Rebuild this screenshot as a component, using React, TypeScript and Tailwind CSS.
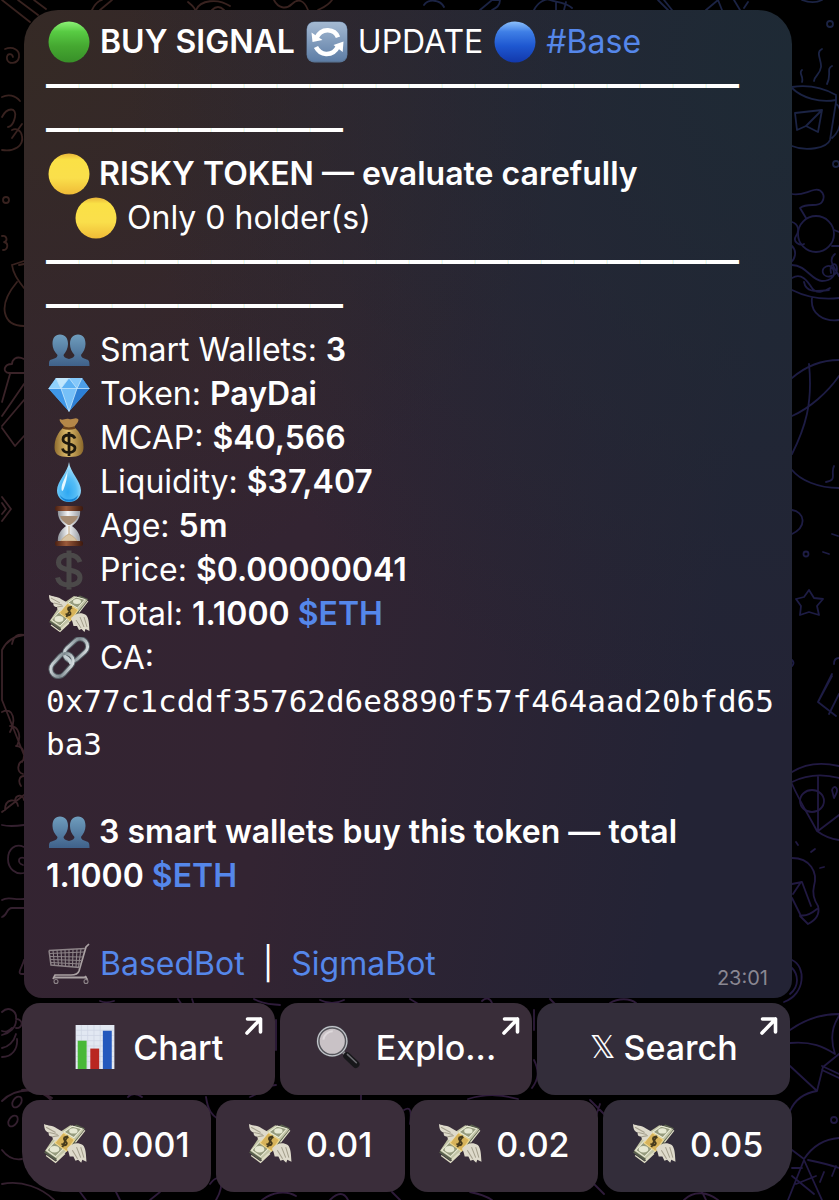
import type { ReactNode } from "react";

/* ───────── Emoji artwork ───────── */
type EmojiName =
    | "green"
    | "blue"
    | "yellow"
    | "refresh"
    | "people"
    | "gem"
    | "bag"
    | "drop"
    | "hourglass"
    | "dollar"
    | "cash"
    | "link"
    | "cart"
    | "chart"
    | "search";

const Gradients = () => (
    <svg className="absolute h-0 w-0" aria-hidden="true">
        <defs>
            <linearGradient id="g-green" x2="0" y2="1">
                <stop offset="0" stopColor="#8df277" />
                <stop offset=".25" stopColor="#58cb43" />
                <stop offset=".6" stopColor="#45a831" />
                <stop offset="1" stopColor="#388f28" />
            </linearGradient>
            <linearGradient id="g-blue" x2="0" y2="1">
                <stop offset="0" stopColor="#8cc0fb" />
                <stop offset=".25" stopColor="#3f7fe6" />
                <stop offset=".6" stopColor="#1e57d0" />
                <stop offset="1" stopColor="#1238ab" />
            </linearGradient>
            <linearGradient id="g-yellow" x2="0" y2="1">
                <stop offset="0" stopColor="#e9b63a" />
                <stop offset=".15" stopColor="#fae146" />
                <stop offset=".6" stopColor="#fadf4b" />
                <stop offset="1" stopColor="#efbb37" />
            </linearGradient>
            <linearGradient id="g-tile" x2="0" y2="1">
                <stop offset="0" stopColor="#a4b9d2" />
                <stop offset="1" stopColor="#5e7ea6" />
            </linearGradient>
            <linearGradient id="g-people" x2="0" y2="1">
                <stop offset="0" stopColor="#6f9dbd" />
                <stop offset="1" stopColor="#3f618a" />
            </linearGradient>
            <linearGradient id="g-bag" x2="1" y2="0">
                <stop offset="0" stopColor="#8f6c2e" />
                <stop offset=".45" stopColor="#dfbd6c" />
                <stop offset="1" stopColor="#8a672a" />
            </linearGradient>
            <radialGradient id="g-drop" cx=".45" cy=".75" r=".7">
                <stop offset="0" stopColor="#2fa8f2" />
                <stop offset=".5" stopColor="#55bdf6" />
                <stop offset="1" stopColor="#b5e6fc" />
            </radialGradient>
            <linearGradient id="g-wood" x2="1" y2="0">
                <stop offset="0" stopColor="#4a2012" />
                <stop offset=".4" stopColor="#9a5a3a" />
                <stop offset="1" stopColor="#3c180d" />
            </linearGradient>
            <linearGradient id="g-glass" x2="1" y2="0">
                <stop offset="0" stopColor="#8d9299" />
                <stop offset=".45" stopColor="#f4f5f6" />
                <stop offset="1" stopColor="#9a9ea5" />
            </linearGradient>
            <linearGradient id="g-steel" x2="1" y2="1">
                <stop offset="0" stopColor="#dce3e6" />
                <stop offset=".5" stopColor="#7d898f" />
                <stop offset="1" stopColor="#e7edef" />
            </linearGradient>
        </defs>
    </svg>
);

const art: Record<EmojiName, ReactNode> = {
    green: <circle cx="21" cy="21" r="20.5" fill="url(#g-green)" />,
    blue: <circle cx="21" cy="21" r="20.5" fill="url(#g-blue)" />,
    yellow: <circle cx="21" cy="21" r="20.5" fill="url(#g-yellow)" />,
    refresh: (
        <g>
            <rect x=".5" y=".5" width="41" height="41" rx="8" fill="#5a7697" />
            <rect x="1" y="1" width="40" height="39" rx="7" fill="url(#g-tile)" />
            <g fill="none" stroke="#fff" strokeWidth="4.6">
                <path d="M10 17.5C13 11 18 9 22 9.2c5 .2 8.5 3 10 7" />
                <path d="M32 25.5C29 31.5 24 33.2 20 33c-4.5-.3-8-3-10-7" />
            </g>
            <path d="M5.5 11.5 6.5 21l10-2zM36.7 31 37.5 20.5 27.5 24z" fill="#fff" />
        </g>
    ),
    people: (
        <g fill="url(#g-people)">
            <path d="M1 37c0-5 0-6 4-7 3-1 4.5-2 4.5-4-3-3-5-7-5-11C4.5 9 7 5.5 12 5.5S20 9 20 15c0 4-2 8-4.5 11 0 2 2 3 5.5 4 3.5-1 5.5-2 5.5-4-3-3-4.5-7-4.5-11 0-6 3-9.5 8-9.5s7.5 3.5 7.5 9.5c0 4-2 8-4.5 11 0 2 1.5 3 4.5 4 3.5 1 4 2 4 7z" />
        </g>
    ),
    gem: (
        <g>
            <path d="M8 5h26l7.5 10.5L21 38.5.5 15.5z" fill="#4ba3ee" />
            <path d="M8 5l5 10.5H.5z" fill="#8fd0fb" />
            <path d="M8 5h13l-8 10.5z" fill="#c1e7fd" />
            <path d="M34 5H21l8 10.5z" fill="#85c8fa" />
            <path d="M21 5l8 10.5H13z" fill="#5db1f3" />
            <path d="M34 5l7.5 10.5H29z" fill="#4c9ee8" />
            <path d="M.5 15.5H13l8 23z" fill="#3f97e8" />
            <path d="M13 15.5h16l-8 23z" fill="#76c0f8" />
            <path d="M29 15.5h12.5L21 38.5z" fill="#2d7fd5" />
            <path d="M.5 15.5h41M13 15.5l8 23 8-23M8 5l5 10.5L21 5l8 10.5L34 5" fill="none" stroke="#c8e9fd" strokeWidth=".8" />
        </g>
    ),
    bag: (
        <g>
            <path d="M12 2c3 2 5-1 9 0s6-2 9 0c2 2-3 6-4 9H17c-1-3-7-7-5-9z" fill="#b48748" />
            <path d="M16 10c-6 5-9.5 12-9.5 20C6.5 37 10 40 21 40s14.5-3 14.5-10c0-8-3.5-15-9.5-20z" fill="url(#g-bag)" />
            <path d="M15 10.5q6 2 12 0" stroke="#6c431b" strokeWidth="2.5" fill="none" />
            <path d="M27 21.5c-1-2.5-3-3.5-6-3.5-4 0-6 2-6 4.5 0 6 12 3 12 8.5 0 3-3 4.5-6 4.5-3.5 0-6-1.5-6.5-4M21 15v24" fill="none" stroke="#1d180d" strokeWidth="2.8" />
        </g>
    ),
    drop: (
        <g>
            <path d="M21 1C20 11 9 20 9 29.5 9 36.5 14.5 41 21 41s12-4.5 12-11.5C33 20 22 11 21 1z" fill="url(#g-drop)" />
            <path d="M19.5 10C18 16 13.5 22 13.5 27.5c0 3 1 3 2 1C17.5 23 19.5 17 19.5 10z" fill="#e5f7ff" />
            <path d="M12 34c4 6 14 6 18 0-1 5-5 6.5-9 6.5S13 38 12 34z" fill="#1682d4" />
        </g>
    ),
    hourglass: (
        <g>
            <path d="M10 4h22c1 9-3 13-8 17 5 4 9 8 8 17H10c-1-9 3-13 8-17-5-4-9-8-8-17z" fill="url(#g-glass)" />
            <path d="M12 11h18c-1 4-4 6.5-8 9h-2c-4-2.5-7-5-8-9z" fill="#a68c73" />
            <path d="M21 21v8c-4 2-6 4-8 7h16c-2-3-4-5-8-7" fill="#d8c4a3" stroke="#c6ab83" />
            <rect x="7" y="1" width="28" height="5" rx="2" fill="url(#g-wood)" />
            <rect x="7" y="36" width="28" height="5" rx="2" fill="url(#g-wood)" />
        </g>
    ),
    dollar: (
        <path
            d="M32 13c-1.5-4.5-5-7-11-7S10.5 8.5 10.5 13.5C10.5 24 32 18 32 28.5c0 5-4.5 7.5-11 7.5-7 0-10.5-3-11.5-7.5M21 1.5v39"
            fill="none"
            stroke="#4b4949"
            strokeWidth="5"
        />
    ),
    cash: (
        <g>
            <path d="M21 8 32 2.5 40 6 30 22 12 37 1 29 12 17z" fill="#59604d" />
            <path d="M12 12.5 26 3l13.5 4-12 14.5L14 35.5 2 27.5z" fill="#c2c5a6" />
            <path d="M20 9.5 28 4l9 2.5-7.5 8.5zM12 18l9 6-9 9-8.5-6z" fill="#969c7e" stroke="#e9ead5" />
            <ellipse cx="29" cy="8.5" rx="4" ry="2.5" fill="#e6e8d2" />
            <ellipse cx="11" cy="26" rx="4.5" ry="3" fill="#e6e8d2" />
            <path d="M3 32 12 38.5 21 30M31 19.5 40 8M13 36l9-8" stroke="#deddc4" strokeWidth="1.2" fill="none" />
            <path d="M19 10 30 17 22.5 28 11.5 20z" fill="#d7b35a" stroke="#f0d98d" />
            <path d="M24 15.5c-1-2-4-1.5-4 .5s3.5 3 2.5 5-4 1.5-4.5-.5M23.5 13l-5 11" stroke="#453a1c" strokeWidth="1.8" fill="none" />
            <path d="M1 2c4 2 8 1 12 4l7 4-7 8c-3 0-4-2-4-4-3 0-4-2-3.5-4C3 10 1 7 1 2z" fill="#dedacb" />
            <path d="M3 5l9 5M6 10l8 2M9 14l6-1" stroke="#a49f8c" fill="none" />
            <path d="M23 25c5-5 10-6 15-3 3 3 3 9 3.5 16l-4-2-1 3-3-3-2.5 1-2-4-3.5 0-1-4z" fill="#dedacb" />
            <path d="M28 27l5 8M32 24l4 10M36 24l3 10" stroke="#a49f8c" fill="none" />
        </g>
    ),
    link: (
        <g fill="none" strokeLinecap="round">
            <g stroke="#535c63" strokeWidth="5">
                <rect x="15" y="5.5" width="26" height="15" rx="7.5" transform="rotate(-42 28 13)" />
                <rect x="1" y="20.5" width="26" height="15" rx="7.5" transform="rotate(-48 14 28)" />
            </g>
            <g stroke="url(#g-steel)" strokeWidth="3">
                <rect x="15" y="5.5" width="26" height="15" rx="7.5" transform="rotate(-42 28 13)" />
                <rect x="1" y="20.5" width="26" height="15" rx="7.5" transform="rotate(-48 14 28)" />
            </g>
            <path d="M18 20c2 1 4 3 4.5 6" stroke="#c6d0d4" strokeWidth="3" />
        </g>
    ),
    cart: (
        <g fill="none" stroke="#8d8488" strokeWidth="1.1">
            <path d="M41 1 38 4 31 28c-1 3-4 4-8 4H7l-2 4" strokeWidth="1.7" stroke="#aaa1a3" />
            <path d="M1 7.5 37 5.5M1 7.5 3 22l29 2.5" strokeWidth="1.5" />
            <path d="M1.5 10.5 36 9M2 13.5l33 .5M2.3 16.5l31.7 1M2.7 19.5l30.5 1.5" />
            <path d="M5 7.3l1.5 15M9 7l1.5 15.5M13 7l1 16M17 6.8 17.5 23M21 6.5v17M25 6.2 24.5 23.5M29 6 28 24M33 5.8 30.5 24" />
            <path d="M6 34.5h33M37 33l2.5 4" strokeWidth="1.8" stroke="#aaa1a3" />
            <circle cx="8" cy="38.5" r="2" />
            <circle cx="38" cy="38.5" r="2" />
        </g>
    ),
    chart: (
        <g>
            <rect x="2.5" y="0" width="37" height="42" fill="#e2e8f2" />
            <path d="M3 5h36M3 10h36M3 15h36M3 20h36M3 25h36M3 30h36M3 35h36M8 0v42M14 0v42M20 0v42M26 0v42" stroke="#cdd5e4" strokeWidth=".7" />
            <rect x="4.5" y="15" width="8.5" height="27" fill="#48b837" />
            <rect x="16.5" y="22.5" width="8.5" height="19.5" fill="#b92620" />
            <rect x="28.5" y="5.5" width="8.5" height="36.5" fill="#2458bd" />
        </g>
    ),
    search: (
        <g>
            <path d="M26 26l5 5" stroke="#8c8c90" strokeWidth="3" />
            <path d="M29.5 29.5 38 37.5" stroke="#17171a" strokeWidth="7" strokeLinecap="round" />
            <path d="M30 28 38.5 36" stroke="#6b6b70" strokeWidth="1.5" strokeLinecap="round" />
            <circle cx="15.5" cy="15.5" r="13.5" fill="#c9c2c6" stroke="#55555b" strokeWidth="3" />
            <circle cx="15.5" cy="15.5" r="14" fill="none" stroke="#c4c7cd" strokeWidth="1.2" />
            <path d="M7 14a9 9 0 0 1 9-8" stroke="#ded9dc" strokeWidth="2" fill="none" />
        </g>
    ),
};

const Emoji = ({ name }: { name: EmojiName }) => (
    <svg viewBox="-2 0 45 42" className="-my-3 inline-block h-[42px] w-[45px] align-[2px]" aria-hidden="true">
        {art[name]}
    </svg>
);

const ButtonEmoji = ({ name }: { name: EmojiName }) => (
    <svg viewBox="0 0 42 42" className="h-11 w-11 shrink-0" aria-hidden="true">
        {art[name]}
    </svg>
);

/* ───────── Chat wallpaper ───────── */
const Wallpaper = () => (
    <svg
        viewBox="0 0 839 1200"
        preserveAspectRatio="xMidYMin slice"
        className="absolute inset-0 h-full w-full"
        aria-hidden="true"
    >
        <g fill="none" strokeWidth="1.8" strokeLinecap="round" strokeLinejoin="round">
            <g stroke="#38221f">
                <path d="M2 0l28 22M18 0l20 15M34 0l12 9M92 10c3-6 6-9 10-10M100 10 112 0M188 2c5 4 9 8 6 10M196 10c4-10 22-12 34-4M212 10c4-4 8-4 12 0M274 0c4 8 12 10 18 4s12-4 16 6M318 10c4-2 10-4 14-10" />
                <path d="M5 49c8-3 15 1 14 8s-11 8-12 2 5-6 6-2M2 97c6-3 13-2 18 4M2 117c5-10 15-10 13 0s-7 10-7 10M22 124 12 138M2 150c12 2 22-4 20-14-1-6-6-8-10-6" />
                <circle cx="6" cy="200" r="3" />
                <path d="M2 236c5-1 6 5 2 6 5 1 4 8-1 8M12 265l12-4M12 265c1 8 5 14 12 23M17 282c-10 12-14 22-12 31 2 9 9 13 19 13M19 265l5-1" />
            </g>
            <g stroke="#3a2328">
                <path d="M24 359c-8-4-12 1-12 5-8 0-10 8-3 9h15M10 374 2 402M24 384 2 416M2 428l13 18 9-10M2 426l22-26M2 497l9 12-9 12M2 503l4 6-4 5" />
                <path d="M2 650c4-8 12-14 22-15M12 644c2-9 6-10 12-9M2 650v50l22 55M2 712c12-6 14 10 8 20M10 726c10 0 11 12 7 20M16 746c8 0 10 10 6 16M24 760c-8 3-7 12-1 14M24 776c-5 0-6 6-3 10M24 795 2 812M5 810c0-12 12-12 13-4M15 802c0-8 8-8 9-2" />
            </g>
            <g stroke="#34202f">
                <path d="M2 825c8 2 15 1 22 0M24 847c-9-4-16 2-16 12s8 16 16 14M24 858c-6-2-7 5-1 7M2 900c6-4 10 0 22-1M2 917c6-2 4-9 10-9h12M24 960c-1 6-8 14-2 14h2" />
                <path d="M2 1012c6-6 15-2 14 7 8 0 7 10 0 9M2 1035c8-2 14-8 14-14M2 1048c6-1 12-6 14-14M2 1057c10 0 16-8 15-18M12 1028c-4 4-6 4-10 3" />
                <path d="M2 1101c14-14 38-14 50 0M2 1150c6 8 14 10 20 9M2 1184c20-4 40 4 52 16M22 1090c12-2 22 2 30 8" />
                <ellipse cx="17" cy="1102" rx="4" ry="6" transform="rotate(35 17 1102)" />
                <ellipse cx="13" cy="1121" rx="4" ry="6" transform="rotate(35 13 1121)" />
            </g>
            <g stroke="#2f1c3b">
                <path d="M100 1001c4 2 8 2 14 0M178 999l4 6M192 999l2 6M254 999c10 6 20 5 26 6M320 1000c8 4 16 4 24 0M410 999l10 6M482 1001c4-4 8-3 10 2M550 999l6 6M610 1003c8-5 20-5 26 0M128 1097c3-4 9-4 14 0M206 1097c2 14 6 18 12 22M250 1097c8-2 14-12 26-12M276 1020v30M361 1095v8M404 1110c6-4 8 0 6 14M468 1099c20-6 34-4 50 0M590 1100l14 14M600 1104l-4 12" />
                <path d="M80 1192l6 8M120 1200l-4-8M150 1200l10-8M210 1184c10-14 16 0 6 16M262 1200c10-8 24-10 34-4M330 1200c8-8 14-8 18 0M392 1192l8 8M470 1192c10 2 16 4 22 8M580 1170l24 24M684 1200c10-10 24-8 34 0M702 1192l4 8M534 1010v20M534 1060c6 12 4 20-2 28" />
            </g>
            <g stroke="#1b2344">
                <path d="M424 5c4-6 16-6 20 2M480 10 492 0h8c0 6-4 8-8 10M534 10c4-8 12-12 16-10s16 2 22 8M556 10v-8M564 10l2-8M658 0l10 10M664 0l8 10M706 10 718 0l4 10M740 10 734 0M744 8l4-6M802 0c8 3 14 3 20 0" />
                <circle cx="830" cy="24" r="3" />
                <path d="M822 49c-7 3 0 12-1 18-1 8-6 8-7 14M802 70c-4 3 2 6 0 12M832 66c-6 3 0 8-5 18M792 87c14-2 28-1 44 8M792 88c10 10 28 15 44 12M836 96v6l-6 38c-3 8-24 12-38 6M836 104c6 2 8 24-4 34M795 113l27-3-4 22-12-6-9 4zM822 110l-16 16" />
                <circle cx="836" cy="164" r="3" />
            </g>
            <g stroke="#1d1c44">
                <path d="M792 194c8 2 14-2 22-4s12 6 8 12-14 0-22 6l6 10" />
                <circle cx="816" cy="234" r="18" />
                <path d="M792 222c6 2 8 8 4 14s4 10 8 8M834 230l5 2M832 246h7M792 246c6 6 2 14-1 16M792 265c14 0 20 16 30 16s14-6 11-12-12-2-10 4 14 4 14-4-8-6-6 4M792 278c10-6 16 4 20 10s12 4 18 0M792 290c16 8 30 10 47 8M804 282c2 10 10 10 25 8M812 298c-2 16 12 24 27 22M835 254c-8 6 0 14 4 22" />
                <path d="M792 378c14-12 30-18 47-18M792 416c18-8 36-24 47-40M809 364c4 40-4 64-17 90M792 470c8 10 26 18 47 18M834 466c-4 8 4 14-8 16M792 510c12 2 16 16 0 24" />
                <circle cx="806" cy="554" r="2.5" />
                <path d="M823 552l6 2M832 534l6 2M809 590l5 8 9 1-6 7 2 9-10-3-9 3 1-9-5-7 8-2zM792 660c2 2 2 4 0 6M832 674l-14 28 18 14M818 702l14-26M829 714l10-20M834 664c0-6 4-6 5-6" />
            </g>
            <g stroke="#211942">
                <path d="M792 772c14-9 30-10 47-6M792 782c16-8 32-8 47-4M792 784c8 18 16 30 25 47 8 6 14 8 22 9M818 776v55M818 831l21-16M832 790c2-6 7-2 4 4l-2 4z" />
                <ellipse cx="812" cy="801" rx="12" ry="11" />
                <path d="M796 842l2 3M811 852l4-3M820 868l4-1M792 858c18 0 26 14 22 28-2 8 0 14 4 20M800 914 792 898M818 906c2 8-2 14-10 18l-8-8M800 915c6 2 12-2 17-6M792 884l10-2 9 24M801 882l-8 12M792 960c14 6 14 34-8 42M792 968c6 6 8 18-2 26" />
                <path d="M790 1030c14-10 30-16 49-16M790 1043c22-2 34 4 45 11M790 1066l27 25 6-24 16-13M817 1091c-12 2-22 8-27 20M839 1016c-8 12-8 26-4 38M822 1066l17 8M822 1070l17 8M792 1150l12 9c8-12 20-20 35-21M792 1168h10M808 1160c10 2 20 4 31 8M788 1200l16-40 18 40M796 1184l20-8M792 1176l22 18M824 1172l-4 10M836 1166l-4 10" />
                <circle cx="834" cy="1120" r="3" />
            </g>
        </g>
    </svg>
);

/* ───────── Message ───────── */
const Divider = () => (
    <p className="-mt-[2px] mb-[2px] font-['Noto_Sans_CJK_SC',sans-serif] text-[33px]">
        {"━".repeat(21)}
        <br />
        {"━".repeat(9)}
    </p>
);

const TextLink = ({ children }: { children: ReactNode }) => (
    <a href="#" className="text-[#5587ea]">
        {children}
    </a>
);

const stats: { icon: EmojiName; label: string; value: string; token?: string }[] = [
    { icon: "people", label: "Smart Wallets:", value: "3" },
    { icon: "gem", label: "Token:", value: "PayDai" },
    { icon: "bag", label: "MCAP:", value: "$40,566" },
    { icon: "drop", label: "Liquidity:", value: "$37,407" },
    { icon: "hourglass", label: "Age:", value: "5m" },
    { icon: "dollar", label: "Price:", value: "$0.00000041" },
    { icon: "cash", label: "Total:", value: "1.1000", token: "$ETH" },
];

const Message = () => (
    <article className="relative ml-[2px] rounded-t-[34px] rounded-b-[18px] bg-[radial-gradient(circle_at_100%_5%,#1e2a35_0%,transparent_55%),radial-gradient(circle_at_0%_5%,#352a25_0%,transparent_45%),linear-gradient(100deg,#342431_0%,#332432_40%,#232335_85%)] pt-[10px] pr-4 pb-3 pl-[22px] text-[32px] leading-[44px] text-white">
        <p>
            <Emoji name="green" /> <b className="font-semibold">BUY SIGNAL</b> <Emoji name="refresh" /> UPDATE{" "}
            <Emoji name="blue" /> <TextLink>#Base</TextLink>
        </p>
        <Divider />
        <p className="font-semibold">
            <Emoji name="yellow" /> RISKY TOKEN — evaluate carefully
        </p>
        <p className="pl-[27px]">
            <Emoji name="yellow" /> Only 0 holder(s)
        </p>
        <Divider />
        {stats.map((s) => (
            <p key={s.label}>
                <Emoji name={s.icon} /> {s.label} <b className="font-semibold">{s.value}</b>
                {s.token && (
                    <b className="font-semibold">
                        {" "}
                        <TextLink>{s.token}</TextLink>
                    </b>
                )}
            </p>
        ))}
        <p>
            <Emoji name="link" /> CA:
        </p>
        <p className="font-['DejaVu_Sans_Mono',monospace] text-[31px] leading-[43px] break-all">
            0x77c1cddf35762d6e8890f57f464aad20bfd65ba3
        </p>
        <p className="mt-11 font-semibold">
            <Emoji name="people" /> 3 smart wallets buy this token — total <span>1.1000</span>{" "}
            <TextLink>$ETH</TextLink>
        </p>
        <div className="mt-11 flex items-end justify-between pr-2">
            <p>
                <Emoji name="cart" /> <TextLink>BasedBot</TextLink>&nbsp; | &nbsp;<TextLink>SigmaBot</TextLink>
            </p>
            <time className="-mb-2 text-xl leading-8 text-[#8a8792]">23:01</time>
        </div>
    </article>
);

/* ───────── Inline keyboard ───────── */
const OpenArrow = () => (
    <svg
        viewBox="0 0 18 18"
        className="absolute top-[14px] right-3 h-[18px] w-[18px]"
        fill="none"
        stroke="#fff"
        strokeWidth="3.6"
        strokeLinecap="round"
        strokeLinejoin="round"
        aria-hidden="true"
    >
        <path d="M2.5 2h13v13M15.5 2 2 16" />
    </svg>
);

const keyClass =
    "relative flex h-[92px] min-w-0 items-center justify-center rounded-[18px] pb-1 text-[34px] font-medium whitespace-nowrap text-white";

const Keyboard = () => (
    <div className="relative mt-[5px] flex flex-col gap-[5px]">
        <div className="grid grid-cols-3 gap-[5px] pr-[2px]">
            <button className={`${keyClass} gap-4 bg-[#3b2d39]`}>
                <ButtonEmoji name="chart" /> Chart
                <OpenArrow />
            </button>
            <button className={`${keyClass} gap-4 bg-[#392d39]`}>
                <ButtonEmoji name="search" /> Explo...
                <OpenArrow />
            </button>
            <button className={`${keyClass} gap-2 bg-[#332d3a]`}>
                <span className="font-['DejaVu_Sans',sans-serif] text-[32px] font-normal">𝕏</span> Search
                <OpenArrow />
            </button>
        </div>
        <div className="grid grid-cols-4 gap-[5px]">
            <button className={`${keyClass} gap-[14px] rounded-bl-[40px] bg-[#3b2d3a]`}>
                <ButtonEmoji name="cash" /> 0.001
            </button>
            <button className={`${keyClass} gap-[14px] bg-[#3a2d3a]`}>
                <ButtonEmoji name="cash" /> 0.01
            </button>
            <button className={`${keyClass} gap-[14px] bg-[#382d39]`}>
                <ButtonEmoji name="cash" /> 0.02
            </button>
            <button className={`${keyClass} gap-[14px] rounded-br-[40px] bg-[#332d3a]`}>
                <ButtonEmoji name="cash" /> 0.05
            </button>
        </div>
    </div>
);

export default function App() {
    return (
        <main className="relative min-h-screen overflow-hidden bg-black pt-[10px] pr-[47px] pb-2 pl-[22px] font-['Inter',sans-serif]">
            <Gradients />
            <Wallpaper />
            <Message />
            <Keyboard />
        </main>
    );
}
